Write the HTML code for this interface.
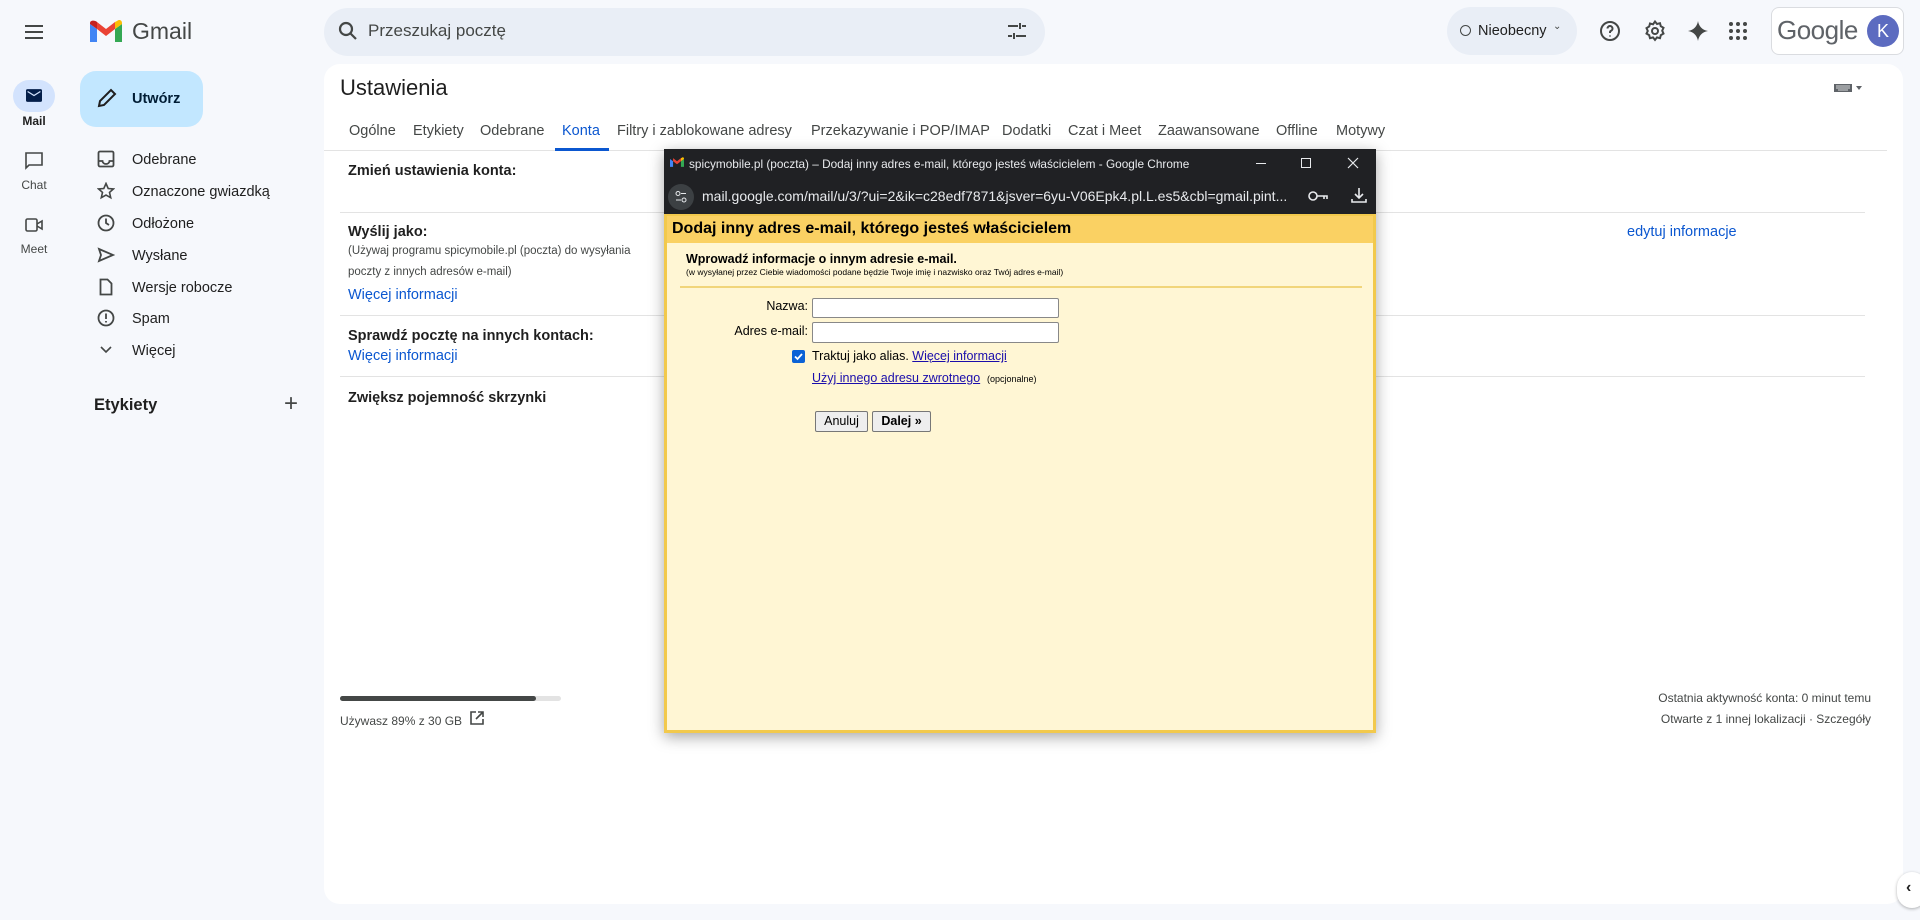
<!DOCTYPE html>
<html><head><meta charset="utf-8"><style>
*{box-sizing:border-box;margin:0;padding:0}
body{width:1920px;height:920px;overflow:hidden;background:#f6f8fc;font-family:"Liberation Sans",Arial,sans-serif;color:#1f1f1f;position:relative}
.a{position:absolute}
.ic{position:absolute;fill:none;stroke:#444746;stroke-width:2}
.nav{position:absolute;left:132px;font-size:14.5px;color:#1f1f1f}
.tab{position:absolute;top:123px;font-size:14.5px;color:#444746}
.h{position:absolute;left:348px;font-size:14.5px;font-weight:bold;color:#1f1f1f}
.sm{position:absolute;left:348px;font-size:11.5px;color:#444746}
.lk{position:absolute;font-size:14.5px;color:#0b57d0}
.ln{position:absolute;left:340px;width:1525px;height:1px;background:#e3e3e3}
</style></head><body>
<!-- rail -->
<svg class="ic" style="left:22px;top:20px" width="24" height="24" viewBox="0 0 24 24"><path d="M3 6h18M3 12h18M3 18h18"/></svg>
<div class="a" style="left:13px;top:80px;width:42px;height:32px;border-radius:16px;background:#d3e3fd"></div>
<svg class="a" style="left:26px;top:89px" width="16" height="13" viewBox="0 0 20 16"><rect x="0" y="0" width="20" height="16" rx="2" fill="#041e49"/><path d="M2 3l8 5 8-5" stroke="#d3e3fd" stroke-width="1.6" fill="none"/></svg>
<div class="a" style="left:0;width:68px;top:114px;text-align:center;font-size:12px;font-weight:bold;color:#1f1f1f">Mail</div>
<svg class="ic" style="left:24px;top:151px;stroke-width:1.6" width="20" height="20" viewBox="0 0 20 20"><path d="M2 2h16v12H5l-3 3z"/></svg>
<div class="a" style="left:0;width:68px;top:178px;text-align:center;font-size:12px;color:#444746">Chat</div>
<svg class="ic" style="left:24px;top:215px;stroke-width:1.6" width="20" height="20" viewBox="0 0 20 20"><rect x="2" y="4" width="11" height="12" rx="1.5"/><path d="M13 9l5-3v8l-5-3"/></svg>
<div class="a" style="left:0;width:68px;top:242px;text-align:center;font-size:12px;color:#444746">Meet</div>
<!-- logo -->
<svg class="a" style="left:90px;top:20px" width="32" height="24" viewBox="0 0 32 24"><path d="M0 4v18h7V9z" fill="#4285f4"/><path d="M25 9v13h7V4z" fill="#34a853"/><path d="M25 2v7l7-5V3c0-3-3-4-5-2z" fill="#fbbc04"/><path d="M7 9V2l9 7 9-7v7l-9 7z" fill="#ea4335"/><path d="M0 3v1l7 5V2C5 0 0 0 0 3z" fill="#c5221f"/></svg>
<div class="a" style="left:132px;top:18px;font-size:23px;color:#444746">Gmail</div>
<!-- search -->
<div class="a" style="left:324px;top:8px;width:721px;height:48px;border-radius:24px;background:#e9eef6"></div>
<svg class="ic" style="left:336px;top:19px;stroke-width:2.2" width="24" height="24" viewBox="0 0 24 24"><circle cx="10" cy="10" r="6"/><path d="M14.5 14.5L20 20"/></svg>
<div class="a" style="left:368px;top:21px;font-size:17px;color:#444746">Przeszukaj pocztę</div>
<svg class="ic" style="left:1005px;top:19px" width="24" height="24" viewBox="0 0 24 24"><path d="M3 7h10M17 7h4M3 17h4M11 17h10M15 4v6M9 14v6"/></svg>
<!-- top right -->
<div class="a" style="left:1447px;top:7px;width:130px;height:48px;border-radius:24px;background:#e9eef6"></div>
<div class="a" style="left:1460px;top:25px;width:11px;height:11px;border:1.5px solid #444746;border-radius:50%"></div>
<div class="a" style="left:1478px;top:23px;font-size:14.5px;color:#1f1f1f">Nieobecny</div>
<div class="a" style="left:1553px;top:21px;font-size:10px;color:#444746">⌄</div>
<svg class="ic" style="left:1598px;top:19px" width="24" height="24" viewBox="0 0 24 24"><circle cx="12" cy="12" r="9"/><path d="M9.5 9.5a2.5 2.5 0 1 1 3.5 2.3c-.7.3-1 .8-1 1.5v.7M12 16.5v1"/></svg>
<svg class="ic" style="left:1643px;top:19px" width="24" height="24" viewBox="0 0 24 24"><circle cx="12" cy="12" r="3"/><path d="M12 2.5l2 2.5 3-.8.8 3 2.7 1.6-1.3 2.9 1.3 2.9-2.7 1.6-.8 3-3-.8-2 2.5-2-2.5-3 .8-.8-3-2.7-1.6L4.8 12 3.5 9.1l2.7-1.6.8-3 3 .8z"/></svg>
<svg class="a" style="left:1686px;top:19px" width="24" height="24" viewBox="0 0 24 24"><path d="M12 2c.8 5 4 9 10 10-6 1-9.2 5-10 10-.8-5-4-9-10-10 6-1 9.2-5 10-10z" fill="#444746"/></svg>
<svg class="a" style="left:1727px;top:20px" width="22" height="22" viewBox="0 0 22 22" fill="#444746"><circle cx="4" cy="4" r="2"/><circle cx="11" cy="4" r="2"/><circle cx="18" cy="4" r="2"/><circle cx="4" cy="11" r="2"/><circle cx="11" cy="11" r="2"/><circle cx="18" cy="11" r="2"/><circle cx="4" cy="18" r="2"/><circle cx="11" cy="18" r="2"/><circle cx="18" cy="18" r="2"/></svg>
<div class="a" style="left:1771px;top:7px;width:133px;height:48px;border-radius:8px;border:1px solid #dadce0;background:#fff"></div>
<div class="a" style="left:1777px;top:15px;font-size:26px;color:#5f6368;letter-spacing:-.5px">Google</div>
<div class="a" style="left:1867px;top:15px;width:32px;height:32px;border-radius:50%;background:#5c6bc0;color:#fff;font-size:18px;text-align:center;line-height:32px">K</div>
<!-- compose -->
<div class="a" style="left:80px;top:71px;width:123px;height:56px;border-radius:16px;background:#c2e7ff"></div>
<svg class="ic" style="left:96px;top:87px;stroke:#1f1f1f" width="22" height="22" viewBox="0 0 22 22"><path d="M3 19l1-5L15 3l4 4L8 18z"/></svg>
<div class="a" style="left:132px;top:91px;font-size:14.5px;font-weight:bold;color:#001d35">Utwórz</div>
<!-- nav -->
<svg class="ic" style="left:97px;top:150px;stroke-width:1.8" width="18" height="18" viewBox="0 0 18 18"><rect x="1.5" y="1.5" width="15" height="15" rx="1.5"/><path d="M1.5 11h4a3.5 3 0 0 0 7 0h4"/></svg>
<div class="nav" style="top:152px">Odebrane</div>
<svg class="ic" style="left:97px;top:182px;stroke-width:1.6" width="18" height="18" viewBox="0 0 18 18"><path d="M9 1.5l2.2 5 5.3.4-4 3.5 1.2 5.3L9 13l-4.7 2.7 1.2-5.3-4-3.5 5.3-.4z"/></svg>
<div class="nav" style="top:184px">Oznaczone gwiazdką</div>
<svg class="ic" style="left:97px;top:214px;stroke-width:1.8" width="18" height="18" viewBox="0 0 18 18"><circle cx="9" cy="9" r="7.5"/><path d="M9 4.5V9l3 2"/></svg>
<div class="nav" style="top:216px">Odłożone</div>
<svg class="ic" style="left:97px;top:246px;stroke-width:1.8" width="18" height="18" viewBox="0 0 18 18"><path d="M2 3l14 6-14 6 2-6z"/></svg>
<div class="nav" style="top:248px">Wysłane</div>
<svg class="ic" style="left:97px;top:278px;stroke-width:1.8" width="18" height="18" viewBox="0 0 18 18"><path d="M3.5 1.5h7l4 4v11h-11z"/></svg>
<div class="nav" style="top:280px">Wersje robocze</div>
<svg class="ic" style="left:97px;top:309px;stroke-width:1.8" width="18" height="18" viewBox="0 0 18 18"><circle cx="9" cy="9" r="7.5"/><path d="M9 4.5v5.5M9 12v1.5"/></svg>
<div class="nav" style="top:311px">Spam</div>
<svg class="ic" style="left:100px;top:346px;stroke-width:1.6" width="12" height="8" viewBox="0 0 12 8"><path d="M1 1l5 5 5-5"/></svg>
<div class="nav" style="top:343px">Więcej</div>
<div class="a" style="left:94px;top:396px;font-size:16.5px;font-weight:bold;color:#1f1f1f">Etykiety</div>
<div class="a" style="left:284px;top:390px;font-size:24px;color:#444746;font-weight:300">+</div>
<!-- main -->
<div class="a" style="left:324px;top:64px;width:1579px;height:840px;border-radius:16px;background:#fff"></div>
<div class="a" style="left:340px;top:75px;font-size:22px;color:#1f1f1f">Ustawienia</div>
<svg class="a" style="left:1834px;top:83px" width="30" height="10" viewBox="0 0 30 10"><rect x="0" y="1" width="18" height="8" fill="#5f6368"/><path d="M2 3h14M2 5h14M4 7h10" stroke="#fff" stroke-width=".7"/><path d="M22 3h6l-3 4z" fill="#5f6368"/></svg>
<div class="tab" style="left:349px">Ogólne</div>
<div class="tab" style="left:413px">Etykiety</div>
<div class="tab" style="left:480px">Odebrane</div>
<div class="tab" style="left:562px;color:#0b57d0">Konta</div>
<div class="tab" style="left:617px">Filtry i zablokowane adresy</div>
<div class="tab" style="left:811px">Przekazywanie i POP/IMAP</div>
<div class="tab" style="left:1002px">Dodatki</div>
<div class="tab" style="left:1068px">Czat i Meet</div>
<div class="tab" style="left:1158px">Zaawansowane</div>
<div class="tab" style="left:1276px">Offline</div>
<div class="tab" style="left:1336px">Motywy</div>
<div class="a" style="left:324px;top:150px;width:1563px;height:1px;background:#e3e3e3"></div>
<div class="a" style="left:555px;top:148px;width:54px;height:3px;background:#0b57d0"></div>
<div class="h" style="top:163px">Zmień ustawienia konta:</div>
<div class="ln" style="top:212px"></div>
<div class="h" style="top:224px">Wyślij jako:</div>
<div class="sm" style="top:245px">(Używaj programu spicymobile.pl (poczta) do wysyłania</div>
<div class="sm" style="top:266px">poczty z innych adresów e-mail)</div>
<div class="lk" style="left:348px;top:287px">Więcej informacji</div>
<div class="lk" style="left:1627px;top:224px">edytuj informacje</div>
<div class="ln" style="top:315px"></div>
<div class="h" style="top:328px">Sprawdź pocztę na innych kontach:</div>
<div class="lk" style="left:348px;top:348px">Więcej informacji</div>
<div class="ln" style="top:376px"></div>
<div class="h" style="top:390px">Zwiększ pojemność skrzynki</div>
<div class="a" style="left:340px;top:696px;width:221px;height:5px;border-radius:3px;background:#e3e3e3"></div>
<div class="a" style="left:340px;top:696px;width:196px;height:5px;border-radius:3px;background:#444746"></div>
<div class="a" style="left:340px;top:714px;font-size:12px;color:#444746">Używasz 89% z 30 GB</div>
<svg class="ic" style="left:470px;top:711px;stroke-width:1.6" width="14" height="14" viewBox="0 0 14 14"><path d="M6 1H1v12h12V8M8 1h5v5M13 1L6 8"/></svg>
<div class="a" style="left:500px;width:1371px;top:691px;text-align:right;font-size:12px;color:#444746">Ostatnia aktywność konta: 0 minut temu</div>
<div class="a" style="left:500px;width:1371px;top:712px;text-align:right;font-size:12px;color:#444746">Otwarte z 1 innej lokalizacji · Szczegóły</div>
<div class="a" style="left:1897px;top:872px;width:30px;height:36px;border-radius:18px;background:#fff;box-shadow:0 1px 3px rgba(0,0,0,.3)"></div>
<div class="a" style="left:1906px;top:879px;font-size:16px;font-weight:bold;color:#1f1f1f">‹</div>
<!-- popup -->
<div class="a" style="left:664px;top:149px;width:712px;height:584px;background:#f2c94c;box-shadow:0 4px 14px rgba(0,0,0,.35)"></div>
<div class="a" style="left:664px;top:149px;width:712px;height:65px;background:#202124"></div>
<svg class="a" style="left:670px;top:157px" width="14" height="11" viewBox="0 0 32 24"><path d="M0 4v18h7V9z" fill="#4285f4"/><path d="M25 9v13h7V4z" fill="#34a853"/><path d="M25 2v7l7-5V3c0-3-3-4-5-2z" fill="#fbbc04"/><path d="M7 9V2l9 7 9-7v7l-9 7z" fill="#ea4335"/></svg>
<div class="a" style="left:689px;top:157px;font-size:11.8px;color:#e8eaed">spicymobile.pl (poczta) – Dodaj inny adres e-mail, którego jesteś właścicielem - Google Chrome</div>
<div class="a" style="left:1256px;top:163px;width:10px;height:1px;background:#e8eaed"></div>
<div class="a" style="left:1301px;top:158px;width:10px;height:10px;border:1px solid #e8eaed"></div>
<svg class="a" style="left:1347px;top:157px" width="12" height="12" viewBox="0 0 12 12"><path d="M1 1l10 10M11 1L1 11" stroke="#e8eaed" stroke-width="1.2"/></svg>
<div class="a" style="left:668px;top:184px;width:26px;height:26px;border-radius:13px;background:#3c4043"></div>
<svg class="a" style="left:675px;top:190px" width="12" height="14" viewBox="0 0 12 14"><circle cx="3" cy="3.5" r="2" stroke="#e8eaed" fill="none"/><path d="M6 3.5h5M1 10h5" stroke="#e8eaed"/><circle cx="9" cy="10" r="2" stroke="#e8eaed" fill="none"/></svg>
<div class="a" style="left:702px;top:188px;font-size:14px;color:#e8eaed">mail.google.com/mail/u/3/?ui=2&amp;ik=c28edf7871&amp;jsver=6yu-V06Epk4.pl.L.es5&amp;cbl=gmail.pint...</div>
<svg class="a" style="left:1308px;top:190px" width="20" height="12" viewBox="0 0 20 12"><circle cx="5" cy="6" r="4" stroke="#e8eaed" stroke-width="1.6" fill="none"/><path d="M9 6h10v3M16 6v3" stroke="#e8eaed" stroke-width="1.6" fill="none"/></svg>
<svg class="a" style="left:1350px;top:186px" width="18" height="18" viewBox="0 0 18 18"><path d="M9 2v10M5 8l4 4 4-4M2 13v3h14v-3" stroke="#e8eaed" stroke-width="1.6" fill="none"/></svg>
<div class="a" style="left:667px;top:216px;width:706px;height:514px;background:#fff6d4"></div>
<div class="a" style="left:667px;top:216px;width:706px;height:27px;background:#fad163"></div>
<div class="a" style="left:672px;top:220px;font-size:16px;font-weight:bold;color:#000">Dodaj inny adres e-mail, którego jesteś właścicielem</div>
<div class="a" style="left:686px;top:252px;font-size:12.5px;font-weight:bold;color:#000">Wprowadź informacje o innym adresie e-mail.</div>
<div class="a" style="left:686px;top:267px;font-size:8.5px;color:#000">(w wysyłanej przez Ciebie wiadomości podane będzie Twoje imię i nazwisko oraz Twój adres e-mail)</div>
<div class="a" style="left:680px;top:286px;width:682px;height:2px;background:#f1d57a"></div>
<div class="a" style="left:660px;width:148px;top:299px;text-align:right;font-size:12.5px;color:#000">Nazwa:</div>
<div class="a" style="left:812px;top:298px;width:247px;height:20px;background:#fff;border:1px solid #888;border-radius:2px"></div>
<div class="a" style="left:660px;width:148px;top:324px;text-align:right;font-size:12.5px;color:#000">Adres e-mail:</div>
<div class="a" style="left:812px;top:322px;width:247px;height:21px;background:#fff;border:1px solid #888;border-radius:2px"></div>
<div class="a" style="left:792px;top:350px;width:13px;height:13px;background:#0b62d6;border-radius:2px"></div>
<svg class="a" style="left:793px;top:351px" width="11" height="11" viewBox="0 0 11 11"><path d="M2 5.5l2.5 2.5L9 3" stroke="#fff" stroke-width="1.8" fill="none"/></svg>
<div class="a" style="left:812px;top:349px;font-size:12.5px;color:#000">Traktuj jako alias. <span style="color:#1a0dab;text-decoration:underline">Więcej informacji</span></div>
<div class="a" style="left:812px;top:371px;font-size:12.5px;color:#1a0dab;text-decoration:underline">Użyj innego adresu zwrotnego</div>
<div class="a" style="left:987px;top:374px;font-size:9px;color:#000">(opcjonalne)</div>
<div class="a" style="left:815px;top:411px;width:53px;height:21px;background:#eee;border:1px solid #777;border-radius:2px;font-size:12.5px;text-align:center;line-height:19px;color:#000">Anuluj</div>
<div class="a" style="left:872px;top:411px;width:59px;height:21px;background:#eee;border:1px solid #777;border-radius:2px;font-size:12.5px;font-weight:bold;text-align:center;line-height:19px;color:#000">Dalej »</div>
</body></html>
